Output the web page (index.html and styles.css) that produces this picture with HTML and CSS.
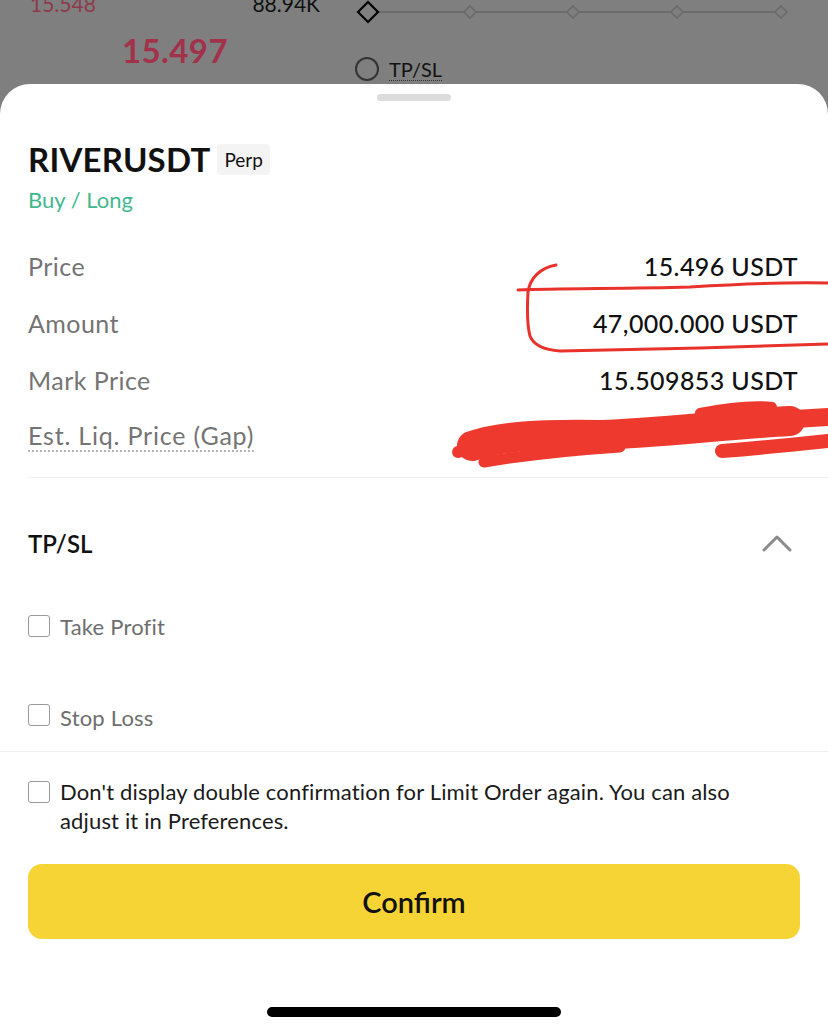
FILE: index.html
```html
<!DOCTYPE html>
<html lang="en">
<head>
  <meta charset="UTF-8">
  <meta name="viewport" content="width=device-width, initial-scale=1.0">
  <title>Confirm Order</title>
  <link rel="stylesheet" href="styles.css">
</head>
<body>
  <!-- TRADE SCREEN BEHIND THE SHEET -->
  <div class="fundo">
    <div class="livro">
      <div class="livro-linha">
        <span class="preco-venda">15.548</span>
        <span class="qtd">88.94K</span>
      </div>
      <div class="preco-atual">15.497</div>
    </div>
    <div class="controles">
      <div class="slider">
        <svg width="440" height="30" viewBox="0 0 440 30">
          <line x1="24" y1="12" x2="430" y2="12" stroke="#6b6b6b" stroke-width="2"/>
          <path d="M13 2 L23 12 L13 22 L3 12 Z" fill="#7f7f7f" stroke="#000" stroke-width="2.2"/>
          <path d="M115 6 L121 12 L115 18 L109 12 Z" fill="#7f7f7f" stroke="#6b6b6b" stroke-width="1.6"/>
          <path d="M218 6 L224 12 L218 18 L212 12 Z" fill="#7f7f7f" stroke="#6b6b6b" stroke-width="1.6"/>
          <path d="M322 6 L328 12 L322 18 L316 12 Z" fill="#7f7f7f" stroke="#6b6b6b" stroke-width="1.6"/>
          <path d="M426 6 L432 12 L426 18 L420 12 Z" fill="#7f7f7f" stroke="#6b6b6b" stroke-width="1.6"/>
        </svg>
      </div>
      <div class="tpsl-fundo">
        <span class="radio"></span>
        <span class="tpsl-texto">TP/SL</span>
      </div>
    </div>
  </div>

  <!-- SHEET -->
  <div class="sheet">
    <div class="alca"></div>

    <div class="titulo">
      <span class="par">RIVERUSDT</span>
      <span class="tag">Perp</span>
    </div>
    <div class="lado">Buy / Long</div>

    <div class="detalhes">
      <div class="linha"><span class="rotulo">Price</span><span class="valor">15.496 USDT</span></div>
      <div class="linha"><span class="rotulo">Amount</span><span class="valor">47,000.000 USDT</span></div>
      <div class="linha"><span class="rotulo">Mark Price</span><span class="valor">15.509853 USDT</span></div>
      <div class="linha"><span class="rotulo pontilhado">Est. Liq. Price (Gap)</span><span class="valor"></span></div>
    </div>

    <div class="tpsl">
      <div class="tpsl-cab">
        <span>TP/SL</span>
        <svg width="30" height="18" viewBox="0 0 30 18">
          <polyline points="2,15 15,2 28,15" fill="none" stroke="#8c8c8c" stroke-width="3" stroke-linecap="round" stroke-linejoin="round"/>
        </svg>
      </div>
      <label class="opcao"><span class="caixa"></span>Take Profit</label>
      <label class="opcao"><span class="caixa"></span>Stop Loss</label>
    </div>

    <div class="rodape">
      <label class="aviso"><span class="caixa"></span><span class="aviso-texto">Don't display double confirmation for Limit Order again. You can also adjust it in Preferences.</span></label>
      <button class="confirmar">Confirm</button>
      <div class="home"></div>
    </div>

    <!-- rabiscos vermelhos por cima -->
    <svg class="rabisco" width="828" height="948" viewBox="0 84 828 948">
      <path d="M556 265 C540 268 530 278 528 292 C527 310 527 325 530 336 C534 346 545 350 560 351 L700 348 L828 344" fill="none" stroke="#e8322b" stroke-width="3" stroke-linecap="round"/>
      <path d="M518 290 C560 288 620 289 690 287 C740 284 790 282 828 283" fill="none" stroke="#e8322b" stroke-width="3" stroke-linecap="round"/>
      <g fill="none" stroke="#ee3a2e" stroke-linecap="round" stroke-linejoin="round">
        <path d="M472 446 C500 436 540 434 600 435 C660 433 720 425 790 421" stroke-width="30"/>
        <path d="M458 452 L492 442" stroke-width="12"/>
        <path d="M484 462 C520 456 560 451 620 447" stroke-width="11"/>
        <path d="M700 413 C730 407 755 405 772 407" stroke-width="10"/>
        <path d="M795 419 L828 417" stroke-width="18"/>
        <path d="M722 451 C760 448 800 444 828 441" stroke-width="14"/>
      </g>
    </svg>
  </div>
</body>
</html>
```

FILE: styles.css
```css
body {
  margin: 0;
  padding: 0;
  width: 828px;
  height: 1032px;
  overflow: hidden;
  font-family: 'Lato', 'Open Sans', sans-serif;
  background-color: #7f7f7f;
  color: #111;
}

/* fundo escurecido */
.fundo {
  height: 84px;
  display: flex;
  overflow: hidden;
}

.livro {
  width: 320px;
  padding-left: 30px;
  box-sizing: border-box;
}

.livro-linha {
  display: flex;
  justify-content: space-between;
  margin-top: -9px;
  font-size: 21px;
}

.preco-venda {
  color: #8e3a4c;
}

.qtd {
  color: #111;
}

.preco-atual {
  margin-top: 14px;
  padding-left: 92px;
  font-size: 33px;
  font-weight: 700;
  letter-spacing: 0.4px;
  color: #a2324a;
}

.controles {
  padding-left: 35px;
}

.slider {
  height: 30px;
}

.slider svg {
  display: block;
}

.tpsl-fundo {
  display: flex;
  align-items: center;
  gap: 10px;
  margin-top: 27px;
  font-size: 20px;
}

.radio {
  width: 20px;
  height: 20px;
  border: 2px solid #333;
  border-radius: 50%;
}

.tpsl-texto {
  color: #111;
  border-bottom: 1px dotted #333;
  line-height: 22px;
}

/* sheet */
.sheet {
  position: relative;
  background-color: #fff;
  height: 948px;
  border-radius: 30px 30px 0 0;
  box-sizing: border-box;
}

.alca {
  width: 74px;
  height: 7px;
  background-color: #dcdcdc;
  border-radius: 4px;
  margin: 0 auto;
  position: relative;
  top: 10px;
}

.titulo {
  display: flex;
  align-items: center;
  gap: 7px;
  padding: 0 28px;
  margin-top: 48px;
}

.par {
  font-size: 33px;
  font-weight: 700;
  letter-spacing: 0.2px;
}

.tag {
  background-color: #f4f4f4;
  font-size: 19px;
  padding: 4px 7px;
  border-radius: 3px;
}

.lado {
  padding: 0 28px;
  margin-top: 7px;
  font-size: 22px;
  color: #43b88f;
}

.detalhes {
  margin: 25px 0 0 28px;
  padding-right: 30px;
  padding-bottom: 12px;
  border-bottom: 1px solid #f0f0f0;
}

.linha {
  display: flex;
  justify-content: space-between;
  align-items: center;
  height: 56.7px;
  font-size: 25px;
  letter-spacing: 0.45px;
}

.rotulo {
  color: #747474;
}

.pontilhado {
  border-bottom: 2px dotted #b5b5b5;
  line-height: 30px;
  letter-spacing: 0.8px;
}

.valor {
  color: #111;
  font-weight: 500;
  letter-spacing: 0.4px;
}

.tpsl {
  padding: 0 28px;
  border-bottom: 1px solid #f0f0f0;
}

.tpsl-cab {
  display: flex;
  justify-content: space-between;
  align-items: center;
  height: 70px;
  margin-top: 31px;
  padding-right: 8px;
  font-size: 24px;
  font-weight: 600;
}

.opcao {
  display: flex;
  align-items: center;
  gap: 10px;
  height: 89px;
  font-size: 22px;
  letter-spacing: 0.2px;
  color: #6e6e6e;
}

.opcao:first-of-type {
  margin-top: 3px;
}

.opcao:last-of-type {
  height: 80px;
  align-items: flex-start;
  padding-top: 33px;
  box-sizing: border-box;
}

.caixa {
  width: 20px;
  height: 20px;
  border: 1.5px solid #9a9a9a;
  border-radius: 3px;
  flex-shrink: 0;
}

.rodape {
  padding: 0 28px;
}

.aviso {
  display: flex;
  align-items: flex-start;
  gap: 10px;
  margin-top: 25px;
  font-size: 22px;
  line-height: 29px;
  letter-spacing: 0.15px;
  color: #1a1a1a;
}

.aviso-texto {
  max-width: 690px;
}

.aviso .caixa {
  margin-top: 4px;
}

.confirmar {
  display: block;
  width: 100%;
  height: 75px;
  margin-top: 29px;
  background-color: #f7d436;
  border: none;
  border-radius: 14px;
  font-family: inherit;
  font-size: 29px;
  font-weight: 600;
  color: #111;
}

.home {
  width: 294px;
  height: 10px;
  background-color: #000;
  border-radius: 5px;
  margin: 68px auto 0;
}

.rabisco {
  position: absolute;
  left: 0;
  top: 0;
  pointer-events: none;
}
```
